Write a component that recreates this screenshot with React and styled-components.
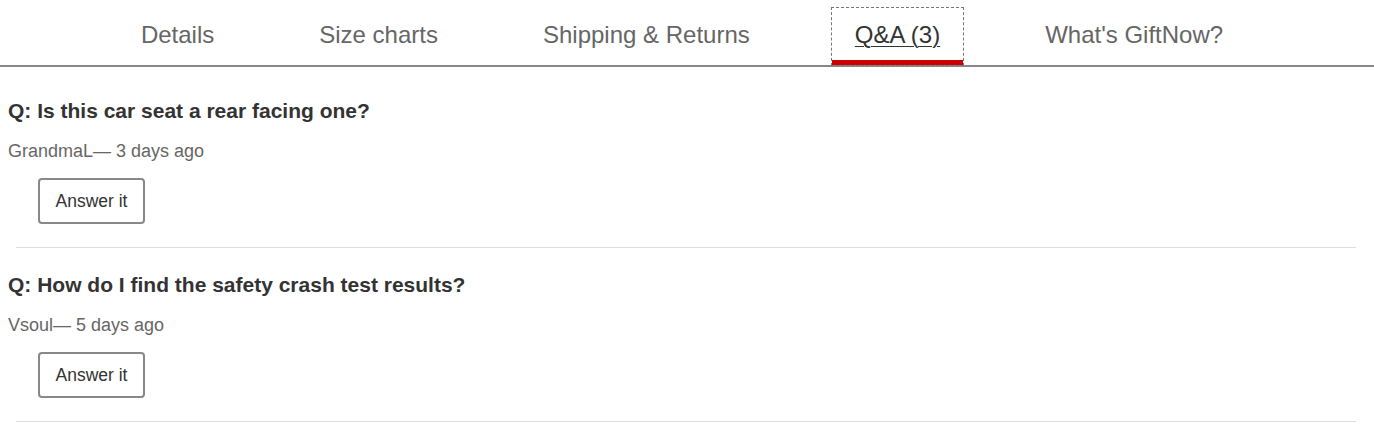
import React from 'react';
import styled, { createGlobalStyle } from 'styled-components';

const GlobalStyle = createGlobalStyle`
  body {
    margin: 0;
    background: #fff;
    font-family: "Liberation Sans", Arial, Helvetica, sans-serif;
  }
`;

const TabBar = styled.div`
  display: flex;
  justify-content: center;
  gap: 59px;
  padding: 8px 10px 0 0;
  border-bottom: 2px solid #888;
`;

const Tab = styled.div`
  box-sizing: border-box;
  height: 57px;
  padding: 13px 23px 0;
  font-size: 24px;
  line-height: 28px;
  color: ${p => (p.$active ? '#333' : '#666')};
  text-decoration: ${p => (p.$active ? 'underline' : 'none')};
  text-underline-offset: 3px;
  text-decoration-thickness: 1px;
  border-bottom: 5px solid ${p => (p.$active ? '#cc0000' : 'transparent')};
  outline: ${p => (p.$active ? '1px dashed #777' : 'none')};
  cursor: pointer;
`;

const List = styled.div`
  padding-top: 32px;
`;

const Item = styled.div`
  padding: 0 8px;
`;

const Question = styled.h3`
  margin: 0;
  font-size: 21px;
  line-height: 24px;
  font-weight: bold;
  color: #333;
`;

const Meta = styled.div`
  margin-top: 17px;
  font-size: 18px;
  line-height: 22px;
  color: #666;
`;

const AnswerButton = styled.button`
  display: block;
  box-sizing: border-box;
  margin: 16px 0 0 30px;
  width: 107px;
  height: 46px;
  background: #fff;
  border: 2px solid #888;
  border-radius: 4px;
  font-family: inherit;
  font-size: 17.5px;
  color: #333;
  cursor: pointer;
`;

const Divider = styled.hr`
  margin: 23px 18px 25px 16px;
  border: none;
  border-top: 1px solid #ddd;
`;

const tabs = ['Details', 'Size charts', 'Shipping & Returns', 'Q&A (3)', "What's GiftNow?"];

const questions = [
  { q: 'Is this car seat a rear facing one?', user: 'GrandmaL', when: '3 days ago' },
  { q: 'How do I find the safety crash test results?', user: 'Vsoul', when: '5 days ago' },
];

export default function App() {
  return (
    <>
      <GlobalStyle />
      <TabBar>
        {tabs.map(t => (
          <Tab key={t} $active={t === 'Q&A (3)'}>{t}</Tab>
        ))}
      </TabBar>
      <List>
        {questions.map(item => (
          <React.Fragment key={item.q}>
            <Item>
              <Question>Q: {item.q}</Question>
              <Meta>{item.user}— {item.when}</Meta>
              <AnswerButton>Answer it</AnswerButton>
            </Item>
            <Divider />
          </React.Fragment>
        ))}
      </List>
    </>
  );
}
